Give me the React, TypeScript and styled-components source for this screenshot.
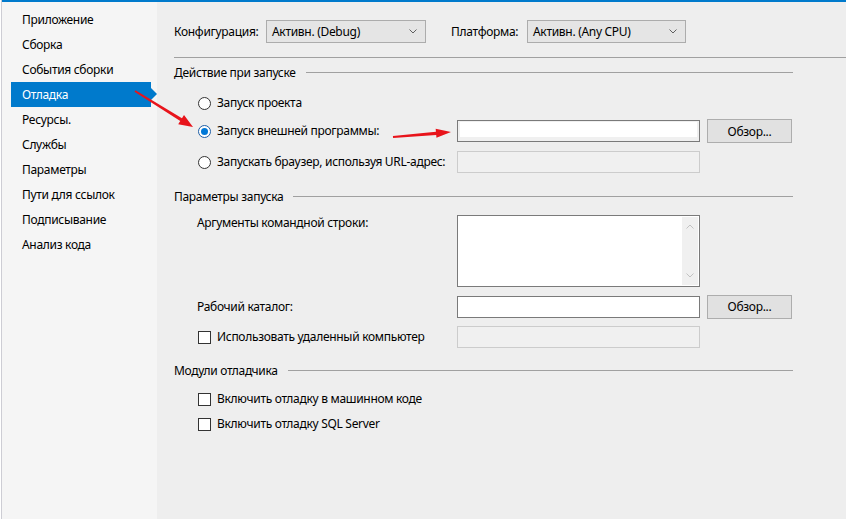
import React from "react";
import styled, { createGlobalStyle } from "styled-components";

const GlobalStyle = createGlobalStyle`
  html, body {
    margin: 0;
    padding: 0;
    background: #ffffff;
  }
  body {
    font-family: "Noto Sans", "Open Sans", sans-serif;
    font-size: 12px;
    letter-spacing: -0.3px;
    color: #000;
  }
  * {
    box-sizing: border-box;
  }
`;

const Window = styled.div`
  position: relative;
  width: 846px;
  height: 519px;
  padding-left: 1px;
  background: #ffffff;
  overflow: hidden;
  display: flex;
`;

const Frame = styled.div`
  flex: 1;
  display: flex;
  flex-direction: column;
  border-left: 1px solid #cdcdd4;
`;

const TopBar = styled.div`
  height: 2px;
  background: #007acc;
`;

const Body = styled.div`
  flex: 1;
  display: flex;
`;

// left navigation
const Sidebar = styled.div`
  width: 155px;
  background: #f5f5f5;
  padding-top: 5px;
  display: flex;
  flex-direction: column;
`;

const NavItem = styled.div<{ $active?: boolean }>`
  position: relative;
  width: 140px;
  height: 25px;
  margin-left: 9px;
  padding-left: 11px;
  display: flex;
  align-items: center;
  color: ${(p) => (p.$active ? "#ffffff" : "#000000")};
  background: ${(p) => (p.$active ? "#007acc" : "transparent")};

  &::after {
    content: "";
    display: ${(p) => (p.$active ? "block" : "none")};
    position: absolute;
    right: -6px;
    top: 6px;
    border-top: 6px solid transparent;
    border-bottom: 6px solid transparent;
    border-left: 6px solid #007acc;
  }
`;

const Main = styled.div`
  flex: 1;
  background: #eeeeee;
  padding-top: 18px;
  padding-left: 17px;
  display: flex;
  flex-direction: column;
`;

const ConfigRow = styled.div`
  display: flex;
  align-items: center;
  gap: 25px;
  height: 23px;
`;

const ConfigGroup = styled.div`
  display: flex;
  align-items: center;
`;

const ConfigLabel = styled.span<{ $w: number }>`
  width: ${(p) => p.$w}px;
`;

const Dropdown = styled.div<{ $w: number }>`
  width: ${(p) => p.$w}px;
  height: 23px;
  background: #e5e5e5;
  border: 1px solid #acacac;
  display: flex;
  align-items: center;
  justify-content: space-between;
  padding: 0 8px 0 5px;
`;

const Separator = styled.div`
  margin-top: 14px;
  height: 1px;
  background: #a0a0a0;
`;

const SectionHeader = styled.div<{ $top: number }>`
  margin-top: ${(p) => p.$top}px;
  width: 619px;
  height: 16px;
  display: flex;
  align-items: center;
`;

const SectionLine = styled.div`
  flex: 1;
  height: 1px;
  margin-left: 10px;
  background: #a0a0a0;
`;

const FieldRow = styled.div<{ $top: number; $h: number; $alignTop?: boolean }>`
  margin-top: ${(p) => p.$top}px;
  height: ${(p) => p.$h}px;
  padding-left: 23px;
  display: grid;
  grid-template-columns: 253px 243px 85px;
  column-gap: 7px;
  align-items: ${(p) => (p.$alignTop ? "start" : "center")};
`;

const LabelCell = styled.div`
  display: flex;
  align-items: center;
  gap: 6px;
  line-height: 16px;
  white-space: nowrap;
`;

const Radio = styled.span<{ $checked?: boolean }>`
  width: 13px;
  height: 13px;
  margin-left: 1px;
  border-radius: 50%;
  border: 1px solid ${(p) => (p.$checked ? "#1f5fa6" : "#333333")};
  background: #ffffff;
  display: flex;
  align-items: center;
  justify-content: center;

  &::after {
    content: "";
    display: ${(p) => (p.$checked ? "block" : "none")};
    width: 7px;
    height: 7px;
    border-radius: 50%;
    background: #0078d7;
  }
`;

const Checkbox = styled.span`
  width: 13px;
  height: 13px;
  margin-left: 1px;
  border: 1px solid #333333;
  background: #ffffff;
`;

const TextBox = styled.div<{ $disabled?: boolean; $focused?: boolean }>`
  height: 22px;
  border: 1px solid ${(p) => (p.$disabled ? "#cccccc" : "#7a7a7a")};
  background: ${(p) => (p.$disabled ? "#f0f0f0" : "#ffffff")};
  box-shadow: ${(p) =>
    p.$focused
      ? "inset 0 0 0 1px #f0f0f0, inset 1px 0 0 1px #f0f0f0, inset -1px -3px 0 1px #f0f0f0"
      : "none"};
`;

const TextArea = styled.div`
  height: 72px;
  border: 1px solid #7a7a7a;
  background: #ffffff;
  padding: 1px;
  display: flex;
  justify-content: flex-end;
`;

const ScrollBar = styled.div`
  width: 16px;
  background: #f0f0f0;
  display: flex;
  flex-direction: column;
  align-items: center;
  justify-content: space-between;
  padding: 7px 0 7px;
`;

const Button = styled.div`
  height: 24px;
  background: #e1e1e1;
  border: 1px solid #adadad;
  display: flex;
  align-items: center;
  justify-content: center;
`;

const Overlay = styled.svg`
  position: absolute;
  left: 0;
  top: 0;
  pointer-events: none;
`;

const Chevron = ({ up, color }: { up?: boolean; color: string }) => (
  <svg width="8" height="5" viewBox="0 0 8 5">
    <polyline
      points={up ? "0.5,4.5 4,1 7.5,4.5" : "0.5,0.5 4,4 7.5,0.5"}
      fill="none"
      stroke={color}
      strokeWidth="1"
    />
  </svg>
);

// tapered red arrow from (x1,y1) to tip (x2,y2)
const arrowPoints = (
  x1: number,
  y1: number,
  x2: number,
  y2: number,
  w0: number,
  w1: number,
  headLen: number,
  headW: number
) => {
  const len = Math.hypot(x2 - x1, y2 - y1);
  const ux = (x2 - x1) / len;
  const uy = (y2 - y1) / len;
  const nx = -uy;
  const ny = ux;
  const bx = x2 - ux * headLen;
  const by = y2 - uy * headLen;
  const pts = [
    [x1 - nx * w0, y1 - ny * w0],
    [bx - nx * w1, by - ny * w1],
    [bx - nx * headW, by - ny * headW],
    [x2, y2],
    [bx + nx * headW, by + ny * headW],
    [bx + nx * w1, by + ny * w1],
    [x1 + nx * w0, y1 + ny * w0],
  ];
  return pts.map((p) => p.map((v) => v.toFixed(2)).join(",")).join(" ");
};

const navItems = [
  "Приложение",
  "Сборка",
  "События сборки",
  "Отладка",
  "Ресурсы.",
  "Службы",
  "Параметры",
  "Пути для ссылок",
  "Подписывание",
  "Анализ кода",
];

export default function App() {
  return (
    <>
      <GlobalStyle />
      <Window>
        <Frame>
          <TopBar />
          <Body>
            <Sidebar>
              {navItems.map((item) => (
                <NavItem key={item} $active={item === "Отладка"}>
                  {item}
                </NavItem>
              ))}
            </Sidebar>
            <Main>
              <ConfigRow>
                <ConfigGroup>
                  <ConfigLabel $w={92}>Конфигурация:</ConfigLabel>
                  <Dropdown $w={160}>
                    Активн. (Debug)
                    <Chevron color="#606060" />
                  </Dropdown>
                </ConfigGroup>
                <ConfigGroup>
                  <ConfigLabel $w={76}>Платформа:</ConfigLabel>
                  <Dropdown $w={159}>
                    Активн. (Any CPU)
                    <Chevron color="#606060" />
                  </Dropdown>
                </ConfigGroup>
              </ConfigRow>
              <Separator />

              <SectionHeader $top={6}>
                Действие при запуске
                <SectionLine />
              </SectionHeader>
              <FieldRow $top={12} $h={22}>
                <LabelCell>
                  <Radio />
                  Запуск проекта
                </LabelCell>
              </FieldRow>
              <FieldRow $top={5} $h={24}>
                <LabelCell>
                  <Radio $checked />
                  Запуск внешней программы:
                </LabelCell>
                <TextBox $focused />
                <Button>Обзор...</Button>
              </FieldRow>
              <FieldRow $top={8} $h={22}>
                <LabelCell>
                  <Radio />
                  Запускать браузер, используя URL-адрес:
                </LabelCell>
                <TextBox $disabled />
              </FieldRow>

              <SectionHeader $top={15}>
                Параметры запуска
                <SectionLine />
              </SectionHeader>
              <FieldRow $top={11} $h={72} $alignTop>
                <LabelCell>Аргументы командной строки:</LabelCell>
                <TextArea>
                  <ScrollBar>
                    <Chevron up color="#c2c2c2" />
                    <Chevron color="#c2c2c2" />
                  </ScrollBar>
                </TextArea>
              </FieldRow>
              <FieldRow $top={7} $h={25}>
                <LabelCell>Рабочий каталог:</LabelCell>
                <TextBox />
                <Button>Обзор...</Button>
              </FieldRow>
              <FieldRow $top={7} $h={22}>
                <LabelCell>
                  <Checkbox />
                  Использовать удаленный компьютер
                </LabelCell>
                <TextBox $disabled />
              </FieldRow>

              <SectionHeader $top={14}>
                Модули отладчика
                <SectionLine />
              </SectionHeader>
              <FieldRow $top={11} $h={20}>
                <LabelCell>
                  <Checkbox />
                  Включить отладку в машинном коде
                </LabelCell>
              </FieldRow>
              <FieldRow $top={5} $h={20}>
                <LabelCell>
                  <Checkbox />
                  Включить отладку SQL Server
                </LabelCell>
              </FieldRow>
            </Main>
          </Body>
        </Frame>
        <Overlay width="846" height="519" viewBox="0 0 846 519">
          <polygon
            points={arrowPoints(135, 91, 193, 127, 1, 1.6, 14, 5.5)}
            fill="#e8141b"
          />
          <polygon
            points={arrowPoints(393, 137, 451, 132, 0.9, 1.6, 15, 4.5)}
            fill="#e8141b"
          />
        </Overlay>
      </Window>
    </>
  );
}
